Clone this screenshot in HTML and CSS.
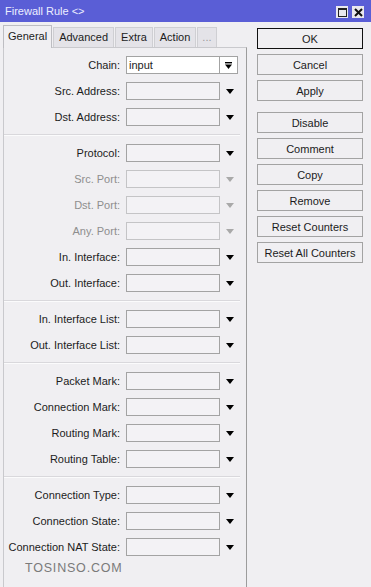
FILE: index.html
```html
<!DOCTYPE html>
<html lang="en">
<head>
  <meta charset="UTF-8" />
  <meta name="viewport" content="width=device-width, initial-scale=1.0" />
  <title>Firewall Rule</title>
  <link rel="stylesheet" href="styles.css">
</head>
<body>

  <div class="window">

    <!-- title bar -->
    <div class="titlebar">
      <span class="title">Firewall Rule &lt;&gt;</span>
      <div class="title-btns">
        <span class="tbtn">
          <svg width="9" height="9" viewBox="0 0 9 9"><rect x="0.5" y="0.5" width="8" height="8" fill="none" stroke="#222" /><rect x="0" y="0" width="9" height="2" fill="#222" /></svg>
        </span>
        <span class="tbtn">
          <svg width="9" height="9" viewBox="0 0 9 9"><path d="M1 1 L8 8 M8 1 L1 8" stroke="#111" stroke-width="2" /></svg>
        </span>
      </div>
    </div>

    <div class="content">

      <div class="left">
        <div class="tabs">
          <div class="tab selected">General</div>
          <div class="tab">Advanced</div>
          <div class="tab">Extra</div>
          <div class="tab">Action</div>
          <div class="tab tab-more">...</div>
        </div>

        <div class="panel">
          <div class="group">
            <div class="row">
              <label>Chain:</label>
              <div class="field white">input</div>
              <div class="combo-btn">
                <svg width="7" height="7" viewBox="0 0 7 7"><rect x="0" y="0" width="7" height="1.4" fill="#000" /><path d="M0 2.5 L7 2.5 L3.5 7 Z" fill="#000" /></svg>
              </div>
            </div>
            <div class="row"><label>Src. Address:</label><div class="field"></div><div class="arrow"></div></div>
            <div class="row"><label>Dst. Address:</label><div class="field"></div><div class="arrow"></div></div>
          </div>
          <div class="sep"></div>

          <div class="group">
            <div class="row"><label>Protocol:</label><div class="field"></div><div class="arrow"></div></div>
            <div class="row disabled"><label>Src. Port:</label><div class="field"></div><div class="arrow"></div></div>
            <div class="row disabled"><label>Dst. Port:</label><div class="field"></div><div class="arrow"></div></div>
            <div class="row disabled"><label>Any. Port:</label><div class="field"></div><div class="arrow"></div></div>
            <div class="row"><label>In. Interface:</label><div class="field"></div><div class="arrow"></div></div>
            <div class="row"><label>Out. Interface:</label><div class="field"></div><div class="arrow"></div></div>
          </div>
          <div class="sep"></div>

          <div class="group">
            <div class="row"><label>In. Interface List:</label><div class="field"></div><div class="arrow"></div></div>
            <div class="row"><label>Out. Interface List:</label><div class="field"></div><div class="arrow"></div></div>
          </div>
          <div class="sep"></div>

          <div class="group">
            <div class="row"><label>Packet Mark:</label><div class="field"></div><div class="arrow"></div></div>
            <div class="row"><label>Connection Mark:</label><div class="field"></div><div class="arrow"></div></div>
            <div class="row"><label>Routing Mark:</label><div class="field"></div><div class="arrow"></div></div>
            <div class="row"><label>Routing Table:</label><div class="field"></div><div class="arrow"></div></div>
          </div>
          <div class="sep"></div>

          <div class="group">
            <div class="row"><label>Connection Type:</label><div class="field"></div><div class="arrow"></div></div>
            <div class="row"><label>Connection State:</label><div class="field"></div><div class="arrow"></div></div>
            <div class="row"><label>Connection NAT State:</label><div class="field"></div><div class="arrow"></div></div>
          </div>

          <div class="watermark">TOSINSO.COM</div>
        </div>
      </div>

      <!-- buttons on the right -->
      <div class="actions">
        <button class="btn btn-default">OK</button>
        <button class="btn">Cancel</button>
        <button class="btn btn-gap">Apply</button>
        <button class="btn">Disable</button>
        <button class="btn">Comment</button>
        <button class="btn">Copy</button>
        <button class="btn">Remove</button>
        <button class="btn">Reset Counters</button>
        <button class="btn">Reset All Counters</button>
      </div>

    </div>
  </div>

</body>
</html>
```

FILE: styles.css
```css
:root {
  --bg: #f0eff2;
  --titlebar: #5a5ed6;
  --line: #a3a3a3;
  --dim: #8e8e8e;
  --text: #1c1c1c;
}

body {
  margin: 0;
  background: var(--bg);
  font-family: "Liberation Sans", Arial, sans-serif;
  font-size: 11px;
  color: var(--text);
}

.window {
  width: 371px;
  height: 587px;
  overflow: hidden;
  background: var(--bg);
}

/* title bar */
.titlebar {
  height: 22px;
  background: var(--titlebar);
  display: flex;
  align-items: center;
  justify-content: space-between;
  padding: 0 7px 0 5px;
  box-sizing: border-box;
}
.title {
  color: #eceeff;
  font-size: 11px;
}
.title-btns {
  display: flex;
  gap: 4px;
  margin-top: 2px;
}
.tbtn {
  width: 12px;
  height: 12px;
  background: #e9e8ee;
  display: flex;
  align-items: center;
  justify-content: center;
}

.content {
  display: flex;
}

/* left side: tabs + form */
.left {
  width: 247px;
  padding-left: 3px;
  box-sizing: border-box;
}
.tabs {
  display: flex;
  align-items: flex-end;
  height: 24px;
  margin-top: 1px;
}
.tab {
  height: 19px;
  line-height: 19px;
  padding: 0 5px;
  background: #e4e3e8;
  border: 1px solid #cfcfd3;
  border-bottom: none;
  color: var(--text);
  margin-right: 1px;
}
.tab.selected {
  height: 22px;
  line-height: 21px;
  background: var(--bg);
  border-color: #bdbdc2;
  margin-bottom: -1px;
  position: relative;
  z-index: 1;
  padding: 0 4px;
}
.tab-more {
  color: #9a9a9a;
  padding: 0 4px;
}

.panel {
  height: 560px;
  border: 1px solid #c9c9cd;
  border-right-color: #9c9c9c;
  border-bottom: none;
  padding-top: 4px;
  box-sizing: border-box;
}

.row {
  display: flex;
  align-items: center;
  height: 26px;
}
.row label {
  width: 116px;
  text-align: right;
  white-space: nowrap;
  margin-right: 6px;
}
.field {
  width: 94px;
  height: 18px;
  box-sizing: border-box;
  border: 1px solid var(--line);
  background: #f3f2f5;
  line-height: 16px;
  padding-left: 2px;
}
.field.white {
  background: #fff;
}
.combo-btn {
  width: 18px;
  height: 18px;
  box-sizing: border-box;
  border: 1px solid var(--line);
  border-left: none;
  background: #fff;
  display: flex;
  align-items: center;
  justify-content: center;
}
.arrow {
  width: 0;
  height: 0;
  margin-left: 6px;
  border-left: 4.5px solid transparent;
  border-right: 4.5px solid transparent;
  border-top: 5px solid #000;
}

.disabled label {
  color: var(--dim);
}
.disabled .field {
  border-color: #c4c4c6;
}
.disabled .arrow {
  border-top-color: #a9a9a9;
}

.sep {
  height: 0;
  margin: 4px 6px 4px 0;
  border-top: 1px solid #d9d8dc;
  border-bottom: 1px solid #fbfbfc;
}

.watermark {
  padding-left: 21px;
  margin-top: 1px;
  font-size: 12.5px;
  letter-spacing: 0.8px;
  color: #7a7a7a;
}

/* right side buttons */
.actions {
  display: flex;
  flex-direction: column;
  margin-left: 10px;
  padding-top: 6px;
  width: 106px;
}
.btn {
  height: 21px;
  margin-bottom: 5px;
  padding: 0;
  font-family: inherit;
  font-size: 11px;
  color: var(--text);
  background: var(--bg);
  border: 1px solid var(--line);
  border-radius: 0;
}
.btn-default {
  border-color: #111;
}
.btn-gap {
  margin-bottom: 11px;
}
```
